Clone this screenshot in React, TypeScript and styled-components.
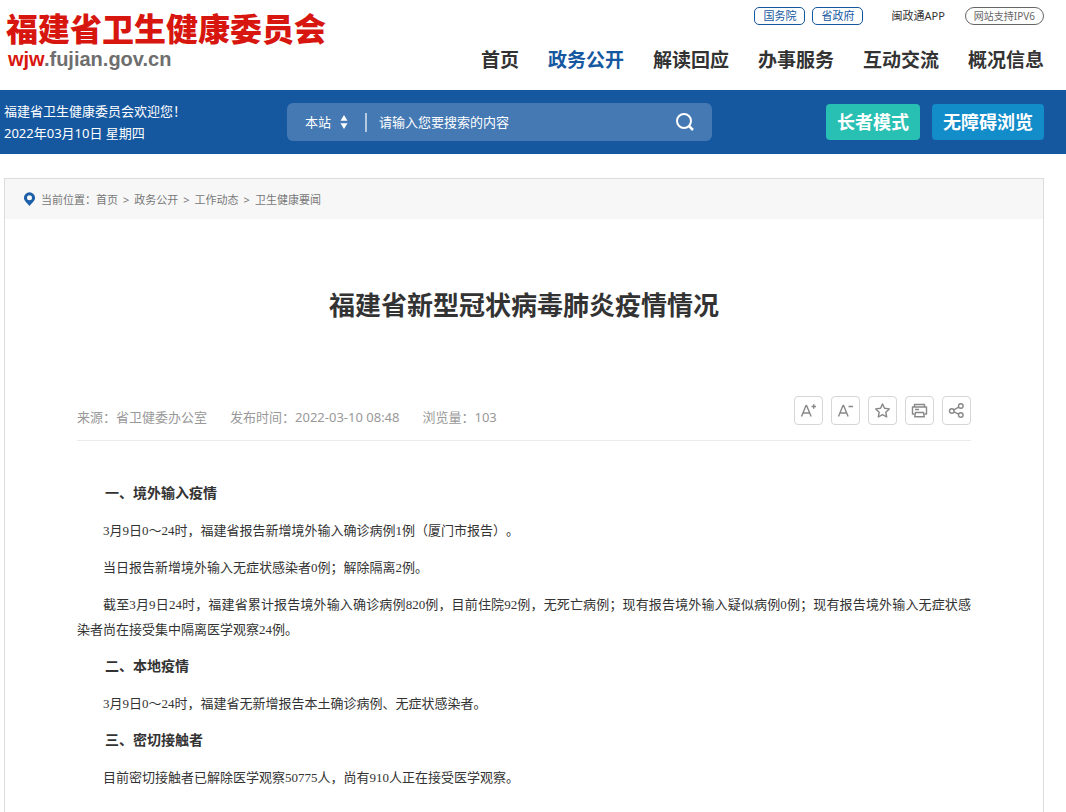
import React from "react";
import styled, { createGlobalStyle, css } from "styled-components";

const BLUE = "#1558a0";
const UI_FONT = '"Noto Sans", "Noto Sans CJK SC", sans-serif';
const ARTICLE_FONT = '"Liberation Serif", "Noto Sans CJK SC", serif';

const GlobalStyle = createGlobalStyle`
  * { box-sizing: border-box; }
  body {
    margin: 0;
    background: #fff;
    color: #333;
    font-family: ${UI_FONT};
    font-size: 13px;
    text-spacing-trim: space-all;
  }
  h1, h2, p, ul, ol { margin: 0; padding: 0; }
  ul, ol { list-style: none; }
  a { color: inherit; text-decoration: none; }
  button, input, select { font: inherit; color: inherit; }
`;

const Header = styled.header`
  display: flex;
  justify-content: space-between;
  height: 90px;
  padding: 0 22px 0 6px;
`;

const Logo = styled.a`
  display: flex;
  flex-direction: column;
  padding-top: 12px;
  white-space: nowrap;
`;

const LogoName = styled.span`
  font-size: 32px;
  line-height: 34px;
  font-weight: 900;
  color: #d7160f;
`;

const LogoDomain = styled.span`
  padding-left: 2px;
  font-family: "Liberation Sans", sans-serif;
  font-size: 20px;
  line-height: 27px;
  font-weight: 700;
  color: #6e6e6e;

  em {
    font-style: normal;
    color: #d7160f;
  }
`;

const HeaderSide = styled.div`
  display: flex;
  flex-direction: column;
  align-items: flex-end;
  padding-top: 7px;
`;

const QuickLinks = styled.div`
  display: flex;
  align-items: center;
  height: 18px;
  font-size: 11px;
`;

const AppLink = styled.a`
  margin: 0 20px 0 28px;
  line-height: 18px;
`;

const PillLink = styled.a<{ $round?: boolean }>`
  height: 18px;
  padding: 0 8px;
  border: 1px solid ${BLUE};
  border-radius: 5px;
  color: ${BLUE};
  line-height: 16px;

  & + & {
    margin-left: 7px;
  }

  ${(p) =>
    p.$round &&
    css`
      border-color: #666;
      border-radius: 9px;
      color: #666;
      font-size: 10px;
    `}
`;

const MainNav = styled.nav`
  display: flex;
  gap: 29px;
  margin-top: 21px;
  font-size: 19px;
  line-height: 28px;
  font-weight: 700;
  white-space: nowrap;
`;

const NavLink = styled.a<{ $active?: boolean }>`
  color: ${(p) => (p.$active ? BLUE : "#333")};
`;

const Bar = styled.div`
  display: flex;
  align-items: center;
  height: 64px;
  padding: 0 22px 0 4px;
  background: ${BLUE};
  color: #fff;
`;

const Welcome = styled.div`
  flex: 0 0 283px;
  line-height: 22px;
`;

const SearchBox = styled.form`
  display: flex;
  align-items: center;
  flex: 0 1 425px;
  height: 38px;
  padding: 0 16px 0 18px;
  border-radius: 6px;
  background: #4579b3;
`;

const ScopeSelect = styled.select`
  appearance: none;
  padding: 0;
  border: 0;
  outline: 0;
  background: transparent;

  option {
    color: #333;
  }
`;

const ScopeArrows = styled.svg`
  margin-left: 8px;
`;

const Divider = styled.span`
  width: 2px;
  height: 19px;
  margin: 0 12px 0 17px;
  background: #b5c9e1;
`;

const SearchInput = styled.input`
  flex: 1;
  min-width: 0;
  padding: 0;
  border: 0;
  outline: 0;
  background: transparent;

  &::placeholder {
    color: #fff;
    opacity: 1;
  }
`;

const SearchButton = styled.button`
  display: flex;
  padding: 0;
  border: 0;
  background: transparent;
  cursor: pointer;
`;

const BarActions = styled.div`
  display: flex;
  gap: 12px;
  margin-left: auto;
`;

const ModeButton = styled.button<{ $color: string }>`
  height: 36px;
  padding: 0 11px;
  border: 0;
  border-radius: 4px;
  background: ${(p) => p.$color};
  color: #fff;
  font-size: 18px;
  font-weight: 700;
  line-height: 36px;
  white-space: nowrap;
  cursor: pointer;
`;

const Panel = styled.main`
  margin: 24px 22px 0 4px;
  border: 1px solid #dcdcdc;
  border-bottom: 0;
`;

const Breadcrumb = styled.nav`
  display: flex;
  align-items: center;
  height: 40px;
  padding-left: 18px;
  background: #f7f7f7;
  color: #777;
  font-size: 11px;

  svg {
    margin-right: 5px;
  }
`;

const Crumbs = styled.ol`
  display: flex;

  li + li::before {
    content: ">";
    margin: 0 5px;
  }
`;

const Article = styled.article`
  padding: 66px 72px 22px;
`;

const Title = styled.h1`
  font-size: 26px;
  line-height: 40px;
  font-weight: 700;
  text-align: center;
`;

const MetaRow = styled.div`
  display: flex;
  justify-content: space-between;
  align-items: flex-start;
  margin-top: 71px;
  padding-bottom: 15px;
  border-bottom: 1px solid #ebebeb;
`;

const Meta = styled.ul`
  display: flex;
  gap: 23px;
  padding-top: 11px;
  margin-bottom: -3px;
  color: #999;
  line-height: 20px;
`;

const Tools = styled.div`
  display: flex;
  gap: 8px;
`;

const ToolButton = styled.button`
  display: grid;
  place-items: center;
  width: 29px;
  height: 29px;
  padding: 0;
  border: 1px solid #d6d6d6;
  border-radius: 4px;
  background: #fff;
  color: #888;
  cursor: pointer;
`;

const Body = styled.div`
  display: flex;
  flex-direction: column;
  gap: 12px;
  padding-top: 40px;
  font-family: ${ARTICLE_FONT};
  font-size: 13px;
  line-height: 25px;
  text-align: justify;

  p,
  h2 {
    text-indent: 2em;
  }
`;

const SectionHeading = styled.h2`
  font-size: 14px;
  line-height: 25px;
  font-weight: 700;
`;

const ToolIcon = ({ children }: { children: React.ReactNode }) => (
  <svg
    width="17"
    height="17"
    viewBox="0 0 17 17"
    fill="none"
    stroke="currentColor"
    strokeWidth="1.4"
    strokeLinejoin="round"
    aria-hidden="true"
  >
    {children}
  </svg>
);

const navItems = ["首页", "政务公开", "解读回应", "办事服务", "互动交流", "概况信息"];
const crumbs = ["首页", "政务公开", "工作动态", "卫生健康要闻"];

const tools = [
  { label: "放大字体", icon: <path d="M1.500 14.500 6 3.500h.6l4.500 11M3 11h6.600M11.500 4.500h4.500M13.750 2.300v4.400" /> },
  { label: "缩小字体", icon: <path d="M1.500 14.500 6 3.500h.6l4.500 11M3 11h6.600M11.500 4.500h4.500" /> },
  {
    label: "收藏",
    icon: <path d="m8.500 2 2 4.300 4.800.6-3.500 3.300.9 4.800-4.200-2.300L4.300 15l.9-4.800-3.500-3.300 4.800-.6z" />,
  },
  {
    label: "打印",
    icon: (
      <>
        <path d="M3.500 4.500v-2h10v2M3.500 12H1.500V5h14v7h-2" />
        <path d="M4.500 10.500h8l.8 4.300H3.700zM4 7.500h4" />
      </>
    ),
  },
  {
    label: "分享",
    icon: (
      <>
        <circle cx="3.800" cy="9" r="2.300" />
        <circle cx="12.800" cy="4" r="2.300" />
        <circle cx="12.800" cy="13" r="2.300" />
        <path d="m5.900 7.900 4.800-2.700M6 9.800l4.600 2.300" />
      </>
    ),
  },
];

export default function App() {
  return (
    <>
      <GlobalStyle />
      <Header>
        <Logo href="#">
          <LogoName>福建省卫生健康委员会</LogoName>
          <LogoDomain>
            <em>wjw</em>.fujian.gov.cn
          </LogoDomain>
        </Logo>
        <HeaderSide>
          <QuickLinks>
            <PillLink href="#">国务院</PillLink>
            <PillLink href="#">省政府</PillLink>
            <AppLink href="#">闽政通APP</AppLink>
            <PillLink href="#" $round>
              网站支持IPV6
            </PillLink>
          </QuickLinks>
          <MainNav>
            {navItems.map((item) => (
              <NavLink key={item} href="#" $active={item === "政务公开"}>
                {item}
              </NavLink>
            ))}
          </MainNav>
        </HeaderSide>
      </Header>

      <Bar>
        <Welcome>
          <p>福建省卫生健康委员会欢迎您！</p>
          <p>2022年03月10日 星期四</p>
        </Welcome>
        <SearchBox role="search">
          <ScopeSelect aria-label="搜索范围">
            <option>本站</option>
          </ScopeSelect>
          <ScopeArrows width="8" height="14" viewBox="0 0 8 14" fill="#fff" aria-hidden="true">
            <path d="M4 0 7.500 5.800h-7zM4 14 .5 8.200h7z" />
          </ScopeArrows>
          <Divider />
          <SearchInput type="text" aria-label="搜索内容" placeholder="请输入您要搜索的内容" />
          <SearchButton type="button" aria-label="搜索">
            <svg width="22" height="22" viewBox="0 0 22 22" fill="none" stroke="#fff" strokeWidth="2">
              <circle cx="10" cy="10" r="7" />
              <path d="m15 15 4 4" strokeWidth="2.500" />
            </svg>
          </SearchButton>
        </SearchBox>
        <BarActions>
          <ModeButton $color="#29c0b4">长者模式</ModeButton>
          <ModeButton $color="#138cca">无障碍浏览</ModeButton>
        </BarActions>
      </Bar>

      <Panel>
        <Breadcrumb aria-label="当前位置">
          <svg width="13" height="14" viewBox="0 0 12 14" aria-hidden="true">
            <path
              fill="#1d5fa8"
              fillRule="evenodd"
              d="M6 .3A5.600 5.600 0 0 0 .4 5.800C.4 9 4 11.500 6 13.900 8 11.500 11.600 9 11.600 5.800A5.600 5.600 0 0 0 6 .3zm0 3a2.500 2.500 0 1 1 0 5 2.500 2.500 0 0 1 0-5z"
            />
          </svg>
          <span>当前位置：</span>
          <Crumbs>
            {crumbs.map((c) => (
              <li key={c}>
                <a href="#">{c}</a>
              </li>
            ))}
          </Crumbs>
        </Breadcrumb>

        <Article>
          <Title>福建省新型冠状病毒肺炎疫情情况</Title>
          <MetaRow>
            <Meta>
              <li>来源：省卫健委办公室</li>
              <li>发布时间：2022-03-10 08:48</li>
              <li>浏览量：103</li>
            </Meta>
            <Tools>
              {tools.map((t) => (
                <ToolButton key={t.label} type="button" aria-label={t.label}>
                  <ToolIcon>{t.icon}</ToolIcon>
                </ToolButton>
              ))}
            </Tools>
          </MetaRow>
          <Body>
            <SectionHeading>一、境外输入疫情</SectionHeading>
            <p>3月9日0～24时，福建省报告新增境外输入确诊病例1例（厦门市报告）。</p>
            <p>当日报告新增境外输入无症状感染者0例；解除隔离2例。</p>
            <p>
              截至3月9日24时，福建省累计报告境外输入确诊病例820例，目前住院92例，无死亡病例；现有报告境外输入疑似病例0例；现有报告境外输入无症状感染者尚在接受集中隔离医学观察24例。
            </p>
            <SectionHeading>二、本地疫情</SectionHeading>
            <p>3月9日0～24时，福建省无新增报告本土确诊病例、无症状感染者。</p>
            <SectionHeading>三、密切接触者</SectionHeading>
            <p>目前密切接触者已解除医学观察50775人，尚有910人正在接受医学观察。</p>
          </Body>
        </Article>
      </Panel>
    </>
  );
}
